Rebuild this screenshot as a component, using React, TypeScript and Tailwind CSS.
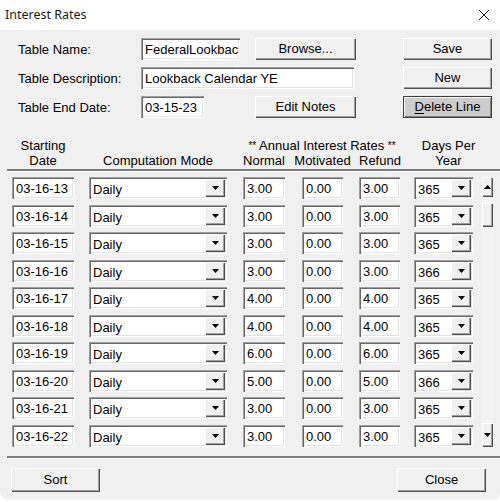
import { ChangeEvent } from 'react';

type RateRow = {
  start: string;
  normal: string;
  motivated: string;
  refund: string;
  days: string;
};

const rows: RateRow[] = [
  { start: '03-16-13', normal: '3.00', motivated: '0.00', refund: '3.00', days: '365' },
  { start: '03-16-14', normal: '3.00', motivated: '0.00', refund: '3.00', days: '365' },
  { start: '03-16-15', normal: '3.00', motivated: '0.00', refund: '3.00', days: '365' },
  { start: '03-16-16', normal: '3.00', motivated: '0.00', refund: '3.00', days: '366' },
  { start: '03-16-17', normal: '4.00', motivated: '0.00', refund: '4.00', days: '365' },
  { start: '03-16-18', normal: '4.00', motivated: '0.00', refund: '4.00', days: '365' },
  { start: '03-16-19', normal: '6.00', motivated: '0.00', refund: '6.00', days: '365' },
  { start: '03-16-20', normal: '5.00', motivated: '0.00', refund: '5.00', days: '366' },
  { start: '03-16-21', normal: '3.00', motivated: '0.00', refund: '3.00', days: '365' },
  { start: '03-16-22', normal: '3.00', motivated: '0.00', refund: '3.00', days: '365' },
];

// classic 3D borders
const sunken =
  'bg-white shadow-[inset_1px_1px_0_#a0a0a0,inset_2px_2px_0_#696969,inset_-1px_-1px_0_#ffffff,inset_-2px_-2px_0_#e3e3e3]';
const raised =
  'bg-[#f0f0f0] shadow-[inset_1px_1px_0_#ffffff,inset_-1px_-1px_0_#505050,inset_-2px_-2px_0_#a0a0a0]';

function TextBox({ value, className = '' }: { value: string; className?: string }) {
  return (
    <div className={`${sunken} ${className} h-[22px] flex items-center pl-[4px] pt-[1px] overflow-hidden whitespace-nowrap`}>
      {value}
    </div>
  );
}

function Button({ label, className = '' }: { label: React.ReactNode; className?: string }) {
  return (
    <button className={`${raised} ${className} h-[22px] flex items-center justify-center pb-[1px]`}>
      {label}
    </button>
  );
}

function Arrow({ up = false }: { up?: boolean }) {
  return (
    <svg width="7" height="4" viewBox="0 0 7 4" className={up ? 'rotate-180' : ''}>
      <path d="M0 0h7L3.5 4z" fill="#000" />
    </svg>
  );
}

function Combo({ value, className = '' }: { value: string; className?: string }) {
  return (
    <div className={`${sunken} ${className} h-[22px] flex items-center p-[2px]`}>
      <span className="flex-1 pl-[2px] pt-[3px]">{value}</span>
      <div className={`${raised} w-[20px] h-[18px] flex items-center justify-center`}>
        <Arrow />
      </div>
    </div>
  );
}

export default function App() {
  const noop = (_e: ChangeEvent) => {};
  void noop;

  return (
    <div
      className="w-[500px] h-[502px] bg-white text-[13px] text-black leading-none"
      style={{ fontFamily: '"Liberation Sans", Arial, sans-serif' }}
    >
      <div className="h-[500px] flex flex-col rounded-b-[8px] overflow-hidden bg-[#f0f0f0]">
        {/* title bar */}
        <div className="h-[30px] bg-white flex items-center justify-between pl-[5px] pr-[8px] shrink-0">
          <span className="text-[12.5px] text-[#1a1a1a]" style={{ fontFamily: '"Noto Sans", "Open Sans", sans-serif' }}>
            Interest Rates
          </span>
          <svg width="12" height="12" viewBox="0 0 12 12" className="mr-[2px]">
            <path d="M1 1l10 10M11 1L1 11" stroke="#222" strokeWidth="1" />
          </svg>
        </div>

        {/* table settings */}
        <div className="pt-[8px] flex flex-col gap-[7px]">
          <div className="flex items-center">
            <span className="w-[141px] pl-[18px]">Table Name:</span>
            <TextBox value="FederalLookbac" className="w-[99px]" />
            <Button label="Browse..." className="w-[101px] ml-[15px]" />
            <Button label="Save" className="w-[89px] ml-[47px]" />
          </div>
          <div className="flex items-center">
            <span className="w-[141px] pl-[18px]">Table Description:</span>
            <TextBox value="Lookback Calendar YE" className="w-[213px]" />
            <Button label="New" className="w-[89px] ml-[49px]" />
          </div>
          <div className="flex items-center">
            <span className="w-[141px] pl-[18px]">Table End Date:</span>
            <TextBox value="03-15-23" className="w-[63px]" />
            <Button label="Edit Notes" className="w-[101px] ml-[51px]" />
            <button className="w-[89px] ml-[47px] h-[22px] flex items-center justify-center pb-[1px] bg-[#cccccc] border border-[#3c3c3c] shadow-[inset_1px_1px_0_#ffffff,inset_-1px_-1px_0_#808080]">
              <span>
                <span className="underline underline-offset-2">D</span>elete Line
              </span>
            </button>
          </div>
        </div>

        {/* column headers */}
        <div className="mt-[20px] flex items-end pl-[12px] leading-[15px] text-center">
          <div className="w-[62px]">
            Starting
            <br />
            Date
          </div>
          <div className="w-[138px] ml-[15px]">Computation Mode</div>
          <div className="ml-[11px] flex flex-col items-center w-[168px]">
            <span className="whitespace-nowrap">
              <span className="text-[10px] align-top">**</span> Annual Interest Rates{' '}
              <span className="text-[10px] align-top">**</span>
            </span>
            <div className="flex w-full pl-[5px]">
              <span className="w-[42px]">Normal</span>
              <span className="w-[41px] ml-[17px] whitespace-nowrap flex justify-center">Motivated</span>
              <span className="w-[41px] ml-[16px]">Refund</span>
            </div>
          </div>
          <div className="w-[59px] ml-[9px] translate-x-[4px]">
            Days Per
            <br />
            Year
          </div>
        </div>
        <div className="mt-[1px] ml-[7px] h-[2px] bg-[#7c7c7c]" />
        <div className="ml-[7px] h-px bg-white" />

        {/* rate rows */}
        <div className="mt-[5px] flex pl-[12px]">
          <div className="flex flex-col gap-[5.5px]">
            {rows.map((r) => (
              <div key={r.start} className="flex">
                <TextBox value={r.start} className="w-[62px]" />
                <Combo value="Daily" className="w-[138px] ml-[15px]" />
                <TextBox value={r.normal} className="w-[42px] ml-[16px]" />
                <TextBox value={r.motivated} className="w-[41px] ml-[17px]" />
                <TextBox value={r.refund} className="w-[41px] ml-[16px]" />
                <Combo value={r.days} className="w-[59px] ml-[14px]" />
              </div>
            ))}
          </div>
          <div className="ml-[9px] w-[11px] flex flex-col bg-[#f3f3f3]">
            <div className={`${raised} h-[20px] flex items-center justify-center`}>
              <Arrow up />
            </div>
            <div className={`${raised} h-[24px] mt-[6px]`} />
            <div className="flex-1" />
            <div className={`${raised} h-[24px] flex items-center justify-center`}>
              <Arrow />
            </div>
          </div>
        </div>

        <div className="mt-[9px] ml-[7px] h-[2px] bg-[#7c7c7c]" />
        <div className="ml-[7px] h-px bg-white" />

        {/* footer buttons */}
        <div className="mt-[9px] flex justify-between pl-[11px] pr-[14px]">
          <Button label="Sort" className="w-[89px] !h-[24px]" />
          <Button label="Close" className="w-[89px] !h-[24px]" />
        </div>
      </div>
    </div>
  );
}
